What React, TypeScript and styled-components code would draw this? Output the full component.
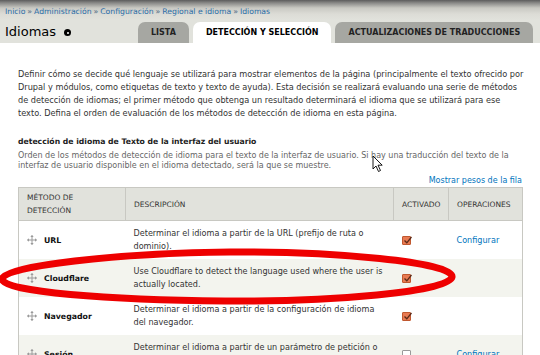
import React from "react";
import styled, { createGlobalStyle } from "styled-components";

const Global = createGlobalStyle`
  html, body { margin: 0; padding: 0; background: #fff; }
  body { font-family: "DejaVu Sans", Verdana, sans-serif; color: #333; }
`;

const Page = styled.div`
  position: relative;
  width: 540px;
  height: 355px;
  overflow: hidden;
  background: #fff;
`;

const Branding = styled.header`
  background: linear-gradient(to bottom, #5c5c5c 0px, #8a8a88 3px, #c9c9c3 8px, #dcdcd6 14px, #e1e2dc 20px);
  padding: 0 0 0 5px;
  height: 43px;
  display: flex;
  flex-direction: column;
`;

const Breadcrumb = styled.div`
  height: 16px;
  padding-top: 4px;
  font-size: 7.7px;
  line-height: 16px;
  white-space: nowrap;
`;

const Crumb = styled.a`
  color: #2a6da8;
  text-decoration: none;
`;

const Sep = styled.span`
  color: #55708a;
  padding: 0 2px;
`;

const TitleRow = styled.div`
  flex: 1;
  display: flex;
  align-items: flex-end;
`;

const TitleBlock = styled.div`
  width: 133px;
  align-self: center;
  display: flex;
  align-items: center;
  gap: 8px;
`;

const Title = styled.h1`
  margin: 0;
  font-size: 13px;
  font-weight: normal;
  color: #000;
  line-height: 16px;
`;

const Shortcut = styled.span`
  width: 7px;
  height: 7px;
  border-radius: 50%;
  background: #000;
  position: relative;
  margin-top: 2px;
  &::after {
    content: "";
    position: absolute;
    left: 2.5px;
    top: 2.5px;
    width: 2px;
    height: 2px;
    border-radius: 50%;
    background: #fff;
  }
`;

const Tabs = styled.ul`
  list-style: none;
  margin: 0;
  padding: 0;
  display: flex;
  gap: 4px;
`;

const Tab = styled.li<{ $active?: boolean }>`
  height: 21px;
  padding: 0 13px;
  border-radius: 7px 7px 0 0;
  background: ${(p) => (p.$active ? "#fff" : "#a6a7a2")};
  color: ${(p) => (p.$active ? "#000" : "#222")};
  font-size: 8px;
  font-weight: bold;
  text-transform: uppercase;
  display: flex;
  align-items: center;
  white-space: nowrap;
`;

const Content = styled.main`
  padding: 0 18px;
`;

const Intro = styled.p`
  margin: 25px 0 0;
  font-size: 8.2px;
  line-height: 13px;
  color: #333;
  white-space: nowrap;
`;

const SectionTitle = styled.h2`
  margin: 15px 0 0;
  font-size: 7.7px;
  line-height: 13px;
  font-weight: bold;
  color: #222;
`;

const SectionDesc = styled.div`
  margin-top: 3px;
  font-size: 8px;
  line-height: 10px;
  color: #666;
`;

const WeightsToggle = styled.div`
  text-align: right;
  font-size: 8px;
  line-height: 13px;
  margin-top: 3px;
  a {
    color: #0074bd;
    text-decoration: none;
  }
`;

const Table = styled.table`
  width: 504px;
  border-collapse: collapse;
  table-layout: fixed;
  border: 1px solid #c8c8c2;
  font-size: 8.1px;
  line-height: 13px;
`;

const Th = styled.th<{ $w: number }>`
  box-sizing: border-box;
  width: ${(p) => p.$w}px;
  background: #e1e2dc;
  border: 1px solid #c8c8c2;
  padding: 3px 8px;
  text-align: left;
  vertical-align: middle;
  font-weight: normal;
  text-transform: uppercase;
  color: #333;
  font-size: 7.5px;
  height: 32px;
`;

const Tr = styled.tr<{ $even?: boolean }>`
  background: ${(p) => (p.$even ? "#f3f4ee" : "#fff")};
`;

const Td = styled.td`
  padding: 6px 8px;
  height: 26px;
  vertical-align: middle;
  color: #333;
`;

const MethodCell = styled.div`
  display: flex;
  align-items: center;
  gap: 7px;
`;

const MethodName = styled.span`
  font-weight: bold;
  font-size: 7.8px;
  color: #111;
`;

const Link = styled.a`
  color: #0074bd;
  text-decoration: none;
`;

const Box = styled.span<{ $checked?: boolean }>`
  display: inline-flex;
  width: 9px;
  height: 9px;
  box-sizing: border-box;
  border: 1px solid ${(p) => (p.$checked ? "#c0582f" : "#9a9a9a")};
  background: ${(p) => (p.$checked ? "#e87a52" : "#fff")};
  border-radius: 1px;
  vertical-align: middle;
  position: relative;
  svg { position: absolute; left: 0; top: -2px; }
`;

const Overlay = styled.svg`
  position: absolute;
  left: 0;
  top: 0;
  pointer-events: none;
`;

const Handle = () => (
  <svg width="10" height="10" viewBox="0 0 10 10">
    <g stroke="#9a9a9a" strokeWidth="1" fill="none">
      <path d="M5 0.5 V9.5 M0.5 5 H9.5" />
    </g>
    <g fill="#9a9a9a">
      <path d="M5 0 L3.3 2 H6.7 Z" />
      <path d="M5 10 L3.3 8 H6.7 Z" />
      <path d="M0 5 L2 3.3 V6.7 Z" />
      <path d="M10 5 L8 3.3 V6.7 Z" />
    </g>
  </svg>
);

const Checkbox = ({ checked }: { checked?: boolean }) => (
  <Box $checked={checked}>
    {checked && (
      <svg width="10" height="10" viewBox="0 0 10 10">
        <path d="M1.5 5.5 L3.8 7.8 L8.5 2" stroke="#5a2a18" strokeWidth="1.3" fill="none" />
      </svg>
    )}
  </Box>
);

type Row = { name: string; desc: string; checked: boolean; configure: boolean };

const rows: Row[] = [
  { name: "URL", desc: "Determinar el idioma a partir de la URL (prefijo de ruta o dominio).", checked: true, configure: true },
  { name: "Cloudflare", desc: "Use Cloudflare to detect the language used where the user is actually located.", checked: true, configure: false },
  { name: "Navegador", desc: "Determinar el idioma a partir de la configuración de idioma del navegador.", checked: true, configure: false },
  { name: "Sesión", desc: "Determinar el idioma a partir de un parámetro de petición o de una variable de sesión.", checked: false, configure: true },
];

const crumbs = ["Inicio", "Administración", "Configuración", "Regional e idioma", "Idiomas"];

const introLines = [
  "Definir cómo se decide qué lenguaje se utilizará para mostrar elementos de la página (principalmente el texto ofrecido por",
  "Drupal y módulos, como etiquetas de texto y texto de ayuda). Esta decisión se realizará evaluando una serie de métodos",
  "de detección de idiomas; el primer método que obtenga un resultado determinará el idioma que se utilizará para ese",
  "texto. Defina el orden de evaluación de los métodos de detección de idioma en esta página.",
];

export default function App() {
  return (
    <Page>
      <Global />
      <Branding>
        <Breadcrumb>
          {crumbs.map((c, i) => (
            <React.Fragment key={c}>
              {i > 0 && <Sep>»</Sep>}
              <Crumb href="#">{c}</Crumb>
            </React.Fragment>
          ))}
        </Breadcrumb>
        <TitleRow>
          <TitleBlock>
            <Title>Idiomas</Title>
            <Shortcut />
          </TitleBlock>
          <Tabs>
            <Tab>Lista</Tab>
            <Tab $active>Detección y selección</Tab>
            <Tab>Actualizaciones de traducciones</Tab>
          </Tabs>
        </TitleRow>
      </Branding>
      <Content>
        <Intro>
          {introLines.map((l, i) => (
            <React.Fragment key={i}>
              {i > 0 && <br />}
              {l}
            </React.Fragment>
          ))}
        </Intro>
        <SectionTitle>detección de idioma de Texto de la interfaz del usuario</SectionTitle>
        <SectionDesc>
          Orden de los métodos de detección de idioma para el texto de la interfaz de usuario. Si hay una traducción del texto de la
          interfaz de usuario disponible en el idioma detectado, será la que se muestre.
        </SectionDesc>
        <WeightsToggle>
          <a href="#">Mostrar pesos de la fila</a>
        </WeightsToggle>
        <Table>
          <thead>
            <tr>
              <Th $w={107}>Método de detección</Th>
              <Th $w={268}>Descripción</Th>
              <Th $w={55}>Activado</Th>
              <Th $w={74}>Operaciones</Th>
            </tr>
          </thead>
          <tbody>
            {rows.map((r, i) => (
              <Tr key={r.name} $even={i % 2 === 1}>
                <Td>
                  <MethodCell>
                    <Handle />
                    <MethodName>{r.name}</MethodName>
                  </MethodCell>
                </Td>
                <Td>{r.desc}</Td>
                <Td>
                  <Checkbox checked={r.checked} />
                </Td>
                <Td>{r.configure && <Link href="#">Configurar</Link>}</Td>
              </Tr>
            ))}
          </tbody>
        </Table>
      </Content>
      <Overlay width="540" height="355" viewBox="0 0 540 355">
        <path
          d="M 230 252 C 330 251, 455 262, 452 277 C 449 292, 330 302, 225 301 C 110 300, 2 292, 2 279 C 2 266, 120 253, 230 252 Z"
          fill="none"
          stroke="#ee0000"
          strokeWidth="7"
        />
        <path
          d="M373 156 L373 169 L376 166 L378.5 171.5 L380.5 170.5 L378 165.2 L382.2 165.2 Z"
          fill="#fff"
          stroke="#000"
          strokeWidth="0.9"
          strokeLinejoin="round"
        />
      </Overlay>
    </Page>
  );
}
